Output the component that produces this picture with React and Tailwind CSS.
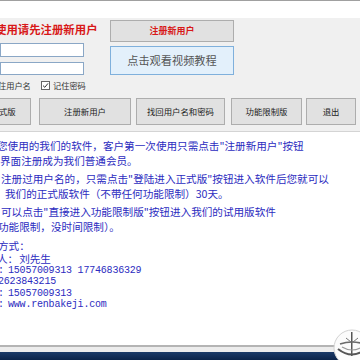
import React from 'react';

const cjk = "font-['Noto_Sans_CJK_SC',sans-serif]";
const mono = "font-['Liberation_Mono','Noto_Sans_CJK_SC',monospace]";

// Grey push-button used along the action row
const WinButton = ({ width, children, className = '' }) => (
  <div
    className={`h-[27px] shrink-0 bg-[#e1e1e1] border border-[#adadad] flex items-center justify-center overflow-hidden text-[8.4px] text-[#1a1a1a] ${cjk} ${width} ${className}`}
  >
    {children}
  </div>
);

const Checkbox = () => (
  <span className="inline-flex w-[9px] h-[9px] border border-[#666] bg-white items-center justify-center">
    <svg width="7" height="7" viewBox="0 0 7 7">
      <path d="M1 3.6 L2.8 5.3 L6 1.4" fill="none" stroke="#333" strokeWidth="1" />
    </svg>
  </span>
);

const Emblem = () => (
  <svg width="32" height="36" viewBox="0 0 32 36" className="absolute left-[332px] top-[326px]">
    <circle cx="20" cy="22" r="18" fill="#fbfbfb" stroke="#d2d2d2" strokeWidth="1" />
    <path d="M19 6 L20.5 6 L20.5 30 L19 30 Z" fill="#555" />
    <path d="M8 18 Q20 14 32 18" fill="none" stroke="#6a6a6a" strokeWidth="1.6" />
    <path d="M6 23 Q20 34 34 23" fill="none" stroke="#555" strokeWidth="2" />
    <path d="M10 21 Q20 27 30 21" fill="none" stroke="#999" strokeWidth="1.2" />
    <path d="M14 12 L19 16 M26 12 L21 16" stroke="#777" strokeWidth="1" />
  </svg>
);

const App = () => {
  return (
    <div className="w-[360px] h-[360px] overflow-hidden bg-[#f0f0f0] flex flex-col relative">
      {/* top white band */}
      <div className="h-[18px] shrink-0 bg-white border-t border-[#a0a0a0]" />

      {/* login area */}
      <div className="flex h-[76px] shrink-0">
        <div className="w-[110px] shrink-0 pt-[5px] flex flex-col">
          <div className={`h-[13px] leading-[13px] -ml-[5px] whitespace-nowrap text-[11.4px] font-bold text-[#d81818] ${cjk}`}>
            使用请先注册新用户
          </div>
          <div className="mt-[7px] w-[84px] h-[14px] bg-white border border-[#8aa7c6]" />
          <div className="mt-[5px] w-[84px] h-[13px] bg-white border border-[#8aa7c6]" />
          <div className={`mt-[4px] h-[12px] flex items-center text-[8.2px] text-[#333] whitespace-nowrap ${cjk}`}>
            <span className="-ml-[2px] w-[43px]">住用户名</span>
            <Checkbox />
            <span className="ml-[3px]">记住密码</span>
          </div>
        </div>
        <div className="w-[124px] shrink-0 pt-[2px] flex flex-col">
          <div className={`h-[22px] bg-[#e1e1e1] border border-[#adadad] flex items-center justify-center text-[9px] font-bold text-[#d81818] ${cjk}`}>
            注册新用户
          </div>
          <div className={`mt-[4px] h-[29px] bg-[#e3f0fb] border border-[#7fb0dc] flex items-center justify-center text-[11.2px] text-[#555] ${cjk}`}>
            点击观看视频教程
          </div>
        </div>
      </div>

      {/* action buttons */}
      <div className="flex mt-[4px] h-[27px] shrink-0">
        <WinButton width="w-[31px]" className="justify-start border-l-0">
          <span className="-ml-[1px]">式版</span>
        </WinButton>
        <WinButton width="w-[92px] ml-[8px]">注册新用户</WinButton>
        <WinButton width="w-[89px] ml-[5px]">找回用户名和密码</WinButton>
        <WinButton width="w-[71px] ml-[6px]">功能限制版</WinButton>
        <WinButton width="w-[50px] ml-[4px]">退出</WinButton>
      </div>

      {/* info text box */}
      <div className={`mt-[6px] h-[214px] shrink-0 bg-white border-t border-[#d4d4d4] pt-[6px] text-[#2c2cc0] whitespace-nowrap ${cjk}`}>
        <div className="text-[10.6px] leading-[15px]">
          <div className="-ml-[3px]">您使用的我们的软件，客户第一次使用只需点击"注册新用户"按钮</div>
          <div>界面注册成为我们普通会员。</div>
        </div>
        <div className="mt-[3px] text-[10.6px] leading-[15px]">
          <div className="ml-[1px]">注册过用户名的，只需点击"登陆进入正式版"按钮进入软件后您就可以</div>
          <div className="ml-[5px]">我们的正式版软件（不带任何功能限制）30天。</div>
        </div>
        <div className="mt-[3px] text-[10.6px] leading-[15px]">
          <div className="ml-[1px]">可以点击"直接进入功能限制版"按钮进入我们的试用版软件</div>
          <div className="-ml-[2px]">功能限制，没时间限制）。</div>
        </div>
        <div className="mt-[5px] text-[10.6px] leading-[14px] -ml-[2px]">方式：</div>
        <div className="text-[10.6px] leading-[12px] -ml-[3px]">
          人：<span className="ml-[1px]">刘先生</span>
        </div>
        <div className={`text-[10px] tracking-[-0.2px] leading-[11.3px] ${mono}`}>
          <div><span className="inline-block w-[10px] -ml-[2px]">:</span>15057009313 17746836329</div>
          <div className="-ml-[2px]">2623843215</div>
          <div><span className="inline-block w-[10px] -ml-[2px]">:</span>15057009313</div>
          <div><span className="inline-block w-[10px] -ml-[2px]">:</span>www.renbakeji.com</div>
        </div>
      </div>

      {/* bottom edge and taskbar */}
      <div className="h-[2px] shrink-0 bg-[#b4b4b4]" />
      <div className="h-[5px] shrink-0 bg-[#ececec]" />
      <div className="flex-1 bg-gradient-to-b from-[#1b3a68] to-[#0b2349]" />

      <Emblem />
    </div>
  );
};

export default App;
